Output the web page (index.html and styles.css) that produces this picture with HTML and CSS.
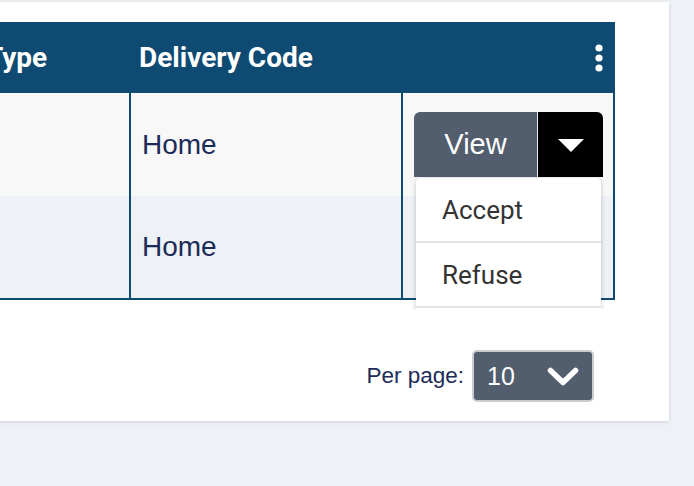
FILE: index.html
```html
<!DOCTYPE html>
<html lang="en">
<head>
<meta charset="utf-8">
<title>Deliveries</title>
<link rel="stylesheet" href="styles.css">
</head>
<body>
<div class="card">
  <div class="table-wrap">
    <div class="table">
      <div class="row head">
        <div class="cell c1">Type</div>
        <div class="cell c2">Delivery Code</div>
        <div class="cell c3 kebab-cell">
          <svg class="kebab" width="8" height="28" viewBox="0 0 8 28"><circle cx="4" cy="4" r="3.6" fill="#fff"/><circle cx="4" cy="14" r="3.6" fill="#fff"/><circle cx="4" cy="24" r="3.6" fill="#fff"/></svg>
        </div>
      </div>
      <div class="row body odd">
        <div class="cell c1"></div>
        <div class="cell c2 divider">Home</div>
        <div class="cell c3 divider actions">
          <div class="btn-group">
            <span class="btn-main">View</span>
            <span class="btn-toggle"><svg width="26" height="14" viewBox="0 0 26 14"><path d="M0 0 H26 L13 13 Z" fill="#fff"/></svg></span>
            <div class="menu">
              <div class="menu-item">Accept</div>
              <div class="menu-item">Refuse</div>
              <div class="menu-item">Cancel</div>
            </div>
          </div>
        </div>
      </div>
      <div class="row body even">
        <div class="cell c1"></div>
        <div class="cell c2 divider">Home</div>
        <div class="cell c3 divider"></div>
      </div>
    </div>
  </div>
  <div class="footer">
    <span class="per-label">Per page:</span>
    <div class="select">
      <span class="select-value">10</span>
      <svg class="chev" width="32" height="20" viewBox="0 0 32 20"><path d="M3.5 3.5 L16 15.5 L28.5 3.5" fill="none" stroke="#fff" stroke-width="5.5" stroke-linecap="round" stroke-linejoin="round"/></svg>
    </div>
  </div>
</div>
</body>
</html>
```
FILE: styles.css
```css
html, body {
  margin: 0;
  padding: 0;
}
body {
  background: #eef1f5;
  font-family: "Liberation Sans", Arial, sans-serif;
  width: 694px;
  height: 486px;
  overflow: hidden;
}
.card {
  background: #fff;
  margin-top: 2px;
  margin-left: -100px;
  width: 769px;
  height: 419px;
  box-sizing: border-box;
  padding: 20px 54px 0 79px;
  box-shadow: 0 1px 4px rgba(0, 0, 0, 0.14);
}
.table-wrap {
  overflow: hidden;
  padding-bottom: 9px;
}
.table {
  display: flex;
  flex-direction: column;
  border-bottom: 2px solid #0f4a73;
  border-right: 2px solid #0f4a73;
}
.row {
  display: grid;
  grid-template-columns: 150px 272px 1fr;
}
.head {
  height: 71px;
  background: #0f4a73;
  color: #fff;
  font-family: Roboto, "Liberation Sans", sans-serif;
  font-weight: 700;
  font-size: 28px;
}
.head .cell {
  display: flex;
  align-items: center;
}
.head .c1 { padding-left: 7px; }
.head .c2 { padding-left: 10px; }
.kebab-cell {
  justify-content: flex-end;
  padding-right: 10px;
}
.body {
  height: 103px;
  color: #1c2b58;
  font-size: 28px;
}
.body.even {
  height: 102px;
}
.odd { background: #f8f8f8; }
.even { background: #eef1f5; }
.body .cell {
  display: flex;
  align-items: center;
}
.divider {
  border-left: 2px solid #0f4a73;
}
.body .c2 {
  padding-left: 11px;
}
.actions {
  align-items: flex-start !important;
  padding-top: 19px;
  padding-left: 11px;
}
.btn-group {
  position: relative;
  display: flex;
  height: 65px;
}
.btn-main {
  width: 123px;
  background: #525e6e;
  color: #fff;
  font-size: 29px;
  display: flex;
  align-items: center;
  justify-content: center;
  border-radius: 6px 0 0 0;
  border-right: 1px solid #e6e6e6;
}
.btn-toggle {
  width: 65px;
  background: #000;
  border-radius: 0 6px 0 0;
  display: flex;
  align-items: center;
  justify-content: center;
}
.btn-toggle svg {
  margin-top: 2px;
}
.menu {
  position: absolute;
  left: 2px;
  top: 66px;
  width: 185px;
  background: #fff;
  border-radius: 5px 5px 0 0;
  box-shadow: 0 1px 5px rgba(0, 0, 0, 0.22);
  font-family: Roboto, "Liberation Sans", sans-serif;
  font-size: 26px;
  color: #333;
}
.menu-item {
  height: 65px;
  box-sizing: border-box;
  padding-left: 26px;
  display: flex;
  align-items: center;
  border-bottom: 2px solid #e3e3e3;
}
.footer {
  display: flex;
  justify-content: flex-end;
  align-items: center;
  margin-top: 41px;
  padding-right: 21px;
  gap: 8px;
}
.per-label {
  color: #1c2b58;
  font-size: 22.5px;
}
.select {
  width: 122px;
  height: 52px;
  box-sizing: border-box;
  background: #525e6e;
  border: 2px solid #c9cdd2;
  border-radius: 5px;
  display: flex;
  align-items: center;
  padding-left: 13px;
  color: #fff;
  font-size: 25px;
}
.select-value {
  width: 60px;
}
.chev {
  margin-left: 0;
  margin-top: 1px;
}
```
